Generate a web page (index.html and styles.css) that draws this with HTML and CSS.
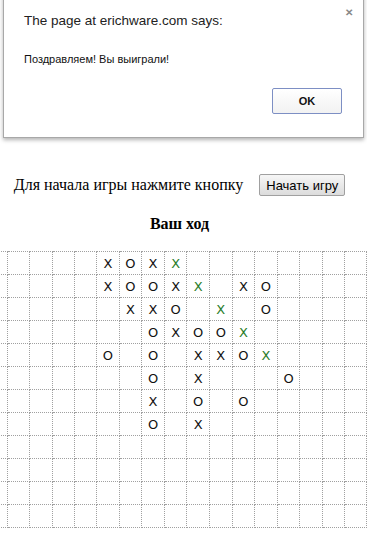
FILE: index.html
```html
<!DOCTYPE html>
<html lang="ru">
<head>
    <meta charset="UTF-8">
    <meta name="viewport" content="width=device-width, initial-scale=1.0">
    <title>Крестики-нолики</title>
    <link rel="stylesheet" href="styles.css">
</head>
<body>
    <div class="rules">
        <p class="rules-line">Крестики-нолики на бесконечном поле</p>
        <p class="rules-line">Играйте против компьютера</p>
        <p class="rules-line">Соберите пять в ряд</p>
    </div>

    <p class="start">
        Для начала игры нажмите кнопку
        <button class="start-btn">Начать игру</button>
    </p>

    <h3 class="turn">Ваш ход</h3>

    <div class="board-wrap">
        <table class="board" id="board"></table>
    </div>

    <div class="dialog">
        <div class="dialog-title">The page at erichware.com says:</div>
        <span class="dialog-close">&#x2715;</span>
        <div class="dialog-text">Поздравляем! Вы выиграли!</div>
        <div class="dialog-actions">
            <button class="dialog-ok">OK</button>
        </div>
    </div>

    <script>
        // x = winning line (green)
        const rows = [
            '.....XOXx........',
            '.....XOOXx.XO....',
            '......XXO.x.O....',
            '.......OXOOx.....',
            '.....O.O.XXOx....',
            '.......O.X...O...',
            '.......X.O.O.....',
            '.......O.X.......',
            '.................',
            '.................',
            '.................',
            '.................'
        ];

        const board = document.getElementById('board');
        rows.forEach(line => {
            const tr = document.createElement('tr');
            for (const ch of line) {
                const td = document.createElement('td');
                if (ch === 'x') {
                    td.textContent = 'X';
                    td.className = 'win';
                } else if (ch !== '.') {
                    td.textContent = ch;
                }
                tr.appendChild(td);
            }
            board.appendChild(tr);
        });
    </script>
</body>
</html>
```

FILE: styles.css
```css
body {
    margin: 0;
    padding: 0 8px;
    font-family: 'Liberation Serif', serif;
    font-size: 16px;
    color: #000;
    overflow: hidden;
}

.rules {
    padding-top: 24px;
}

.rules-line {
    margin: 0 0 18px;
    line-height: 19px;
}

.start {
    margin: 57px 0 0;
    text-align: center;
    line-height: 22px;
    padding-right: 8px;
}

.start-btn {
    margin-left: 12px;
    height: 22px;
    padding: 0 6px;
    font-family: 'Liberation Sans', sans-serif;
    font-size: 13px;
    color: #000;
    background: linear-gradient(#f6f6f6, #dcdcdc);
    border: 1px solid #a0a0a0;
    border-radius: 2px;
    vertical-align: top;
}

.turn {
    margin: 18px 0 0;
    text-align: center;
    font-size: 16px;
    line-height: 20px;
    padding-right: 8px;
}

.board-wrap {
    margin: 17px -8px 0;
    overflow: hidden;
}

.board {
    border-collapse: collapse;
    margin-left: -15px;
}

.board td {
    width: 22px;
    height: 22px;
    padding: 0;
    border: 1px dotted #a0a0a0;
    text-align: center;
    font-family: 'DejaVu Sans', sans-serif;
    font-size: 13px;
    color: #111;
}

.board td.win {
    color: #2a7d2a;
}

/* alert box */
.dialog {
    position: absolute;
    top: -10px;
    left: 3px;
    width: 359px;
    height: 146px;
    background: #fff;
    border: 1px solid #a8a8a8;
    box-shadow: 0 2px 4px rgba(0, 0, 0, 0.3);
    font-family: 'Liberation Sans', sans-serif;
}

.dialog-title {
    margin: 22px 0 0 20px;
    font-size: 13.5px;
    color: #222;
}

.dialog-close {
    position: absolute;
    top: 16px;
    right: 10px;
    font-size: 10px;
    font-weight: bold;
    color: #888;
}

.dialog-text {
    margin: 25px 0 0 20px;
    font-size: 11px;
    color: #111;
}

.dialog-actions {
    display: flex;
    justify-content: flex-end;
    margin: 23px 21px 0 0;
}

.dialog-ok {
    width: 70px;
    height: 26px;
    font-family: 'Liberation Sans', sans-serif;
    font-size: 11px;
    font-weight: bold;
    color: #111;
    background: linear-gradient(#fff, #f2f2f2);
    border: 1px solid #7d8fc4;
    border-radius: 2px;
}
```
